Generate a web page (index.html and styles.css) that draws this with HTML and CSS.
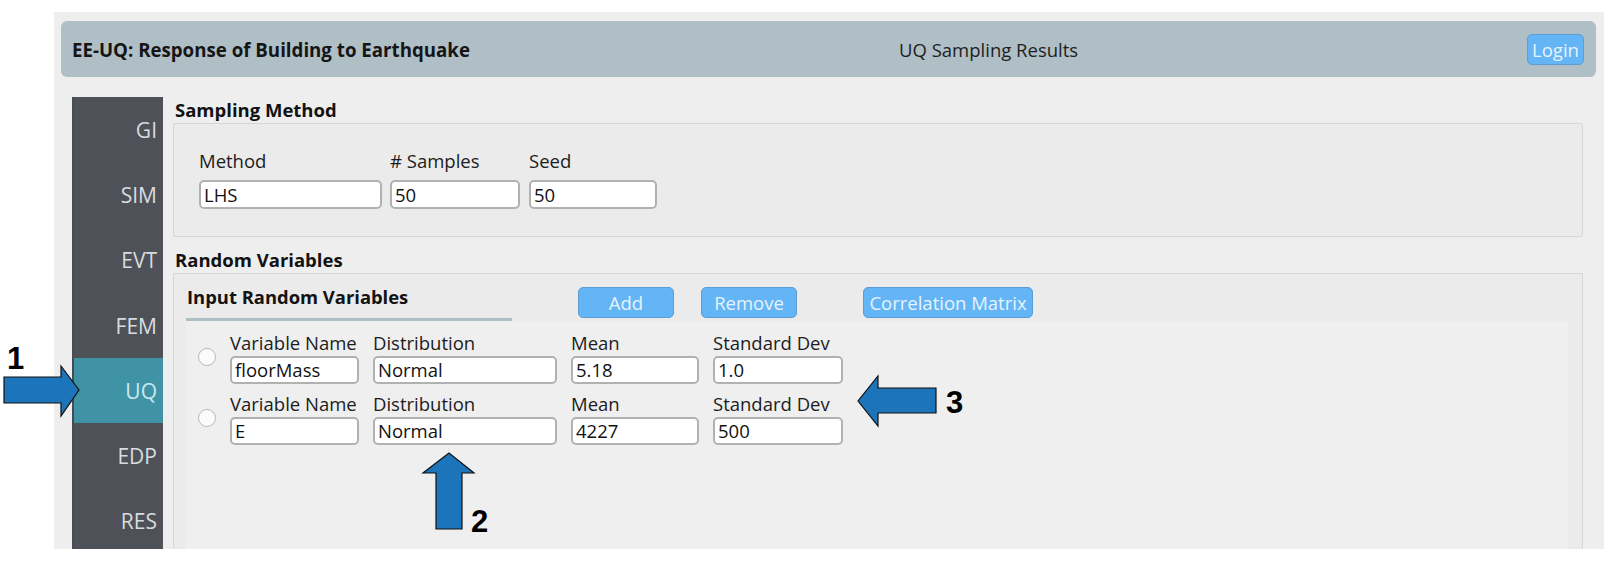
FILE: index.html
```html
<!DOCTYPE html>
<html>
<head>
<meta charset="utf-8">
<link rel="stylesheet" href="styles.css">
</head>
<body>
<div class="app">
  <header class="topbar">
    <div class="app-title">EE-UQ: Response of Building to Earthquake</div>
    <div class="page-title">UQ Sampling Results</div>
    <div class="btn login">Login</div>
  </header>
  <div class="body">
    <nav class="sidebar">
      <div class="nav-item">GI</div>
      <div class="nav-item">SIM</div>
      <div class="nav-item">EVT</div>
      <div class="nav-item">FEM</div>
      <div class="nav-item active">UQ</div>
      <div class="nav-item">EDP</div>
      <div class="nav-item">RES</div>
    </nav>
    <main class="content">
      <div class="section-title">Sampling Method</div>
      <div class="box sampling">
        <div class="field w-method"><div class="label">Method</div><div class="input">LHS</div></div>
        <div class="field w-samples"><div class="label"># Samples</div><div class="input">50</div></div>
        <div class="field w-seed"><div class="label">Seed</div><div class="input">50</div></div>
      </div>
      <div class="section-title second">Random Variables</div>
      <div class="box random">
        <div class="tabbar">
          <div class="tab">Input Random Variables</div>
          <div class="btn add">Add</div>
          <div class="btn remove">Remove</div>
          <div class="btn corr">Correlation Matrix</div>
        </div>
        <div class="vars">
          <div class="var-row">
            <span class="radio"></span>
            <div class="field w-name"><div class="label">Variable Name</div><div class="input">floorMass</div></div>
            <div class="field w-dist"><div class="label">Distribution</div><div class="input">Normal</div></div>
            <div class="field w-mean"><div class="label">Mean</div><div class="input">5.18</div></div>
            <div class="field w-std"><div class="label">Standard Dev</div><div class="input">1.0</div></div>
          </div>
          <div class="var-row">
            <span class="radio"></span>
            <div class="field w-name"><div class="label">Variable Name</div><div class="input">E</div></div>
            <div class="field w-dist"><div class="label">Distribution</div><div class="input">Normal</div></div>
            <div class="field w-mean"><div class="label">Mean</div><div class="input">4227</div></div>
            <div class="field w-std"><div class="label">Standard Dev</div><div class="input">500</div></div>
          </div>
        </div>
      </div>
    </main>
  </div>
</div>
<svg class="annotations" width="1615" height="569" viewBox="0 0 1615 569">
  <polygon class="arrow" points="4,377 61,377 61,366 79,390 61,416 61,403 4,403"/>
  <polygon class="arrow" points="436,529 436,473 423,473 449,453 474,473 462,473 462,529"/>
  <polygon class="arrow" points="936,388 878,388 878,376 858,401 878,426 878,413 936,413"/>
  <text class="num" x="7" y="369">1</text>
  <text class="num" x="471" y="532">2</text>
  <text class="num" x="946" y="413">3</text>
</svg>
</body>
</html>
```

FILE: styles.css
```css
* { box-sizing: border-box; }
html, body { margin: 0; padding: 0; background: #ffffff; }
body {
  width: 1615px;
  height: 569px;
  overflow: hidden;
  position: relative;
  font-family: "Open Sans", "Noto Sans", sans-serif;
  font-size: 18.5px;
  color: #1c1c1c;
}
.app {
  margin: 12px 0 0 54px;
  width: 1550px;
  height: 537px;
  background: #eeeeee;
  overflow: hidden;
  display: flex;
  flex-direction: column;
}
.topbar {
  margin: 9px 8px 0 7px;
  height: 56px;
  background: #b0bec5;
  border-radius: 6px;
  display: grid;
  grid-template-columns: 827px 1fr auto;
  align-items: center;
  padding: 0 12px 0 11px;
}
.app-title { font-weight: 700; font-size: 18.7px; color: #151515; }
.page-title { font-size: 18.5px; color: #1e1e1e; }
.btn {
  background: #64b5f6;
  border: 1px solid #5b9ed6;
  border-radius: 5px;
  color: #e6f3fd;
  font-size: 18.5px;
  display: flex;
  align-items: center;
  justify-content: center;
  height: 31px;
}
.login { width: 57px; }
.body {
  flex: 1;
  display: flex;
  margin-top: 20px;
  padding-left: 18px;
  gap: 10px;
  min-height: 0;
}
.sidebar {
  width: 91px;
  background: #4e5158;
  border-left: 2px solid #484b51;
  display: flex;
  flex-direction: column;
}
.nav-item {
  height: 65.3px;
  flex: none;
  display: flex;
  align-items: center;
  justify-content: flex-end;
  padding-right: 6px;
  font-size: 21px;
  color: #d9dcdf;
}
.nav-item.active { background: #3f93a5; color: #cbe8f1; }
.content { width: 1410px; display: flex; flex-direction: column; min-height: 0; }
.section-title { font-weight: 700; font-size: 18.5px; line-height: 26px; height: 26px; color: #121212; padding-left: 2px; }
.section-title.second { margin-top: 10px; }
.box {
  background: #ebebeb;
  border: 1px solid #d6d6d6;
  border-radius: 2px;
}
.sampling {
  display: flex;
  gap: 8px;
  padding: 25px 24px 27px 25px;
}
.field { display: flex; flex-direction: column; }
.label { line-height: 24px; height: 24px; margin-bottom: 7px; white-space: nowrap; }
.input {
  background: #ffffff;
  border: 2px solid #b1b1b1;
  border-radius: 5px;
  height: 29px;
  line-height: 25px;
  padding: 0 3px;
  color: #111;
  white-space: nowrap;
  overflow: hidden;
}
.w-method { width: 183px; }
.w-samples { width: 130px; }
.w-seed { width: 128px; margin-left: 1px; }
.random {
  flex: 1;
  padding: 0 14px 0 12px;
  display: flex;
  flex-direction: column;
  border-bottom: none;
}
.tabbar { height: 47px; flex: none; display: flex; align-items: flex-end; }
.tab {
  width: 326px;
  font-weight: 700;
  font-size: 18.4px;
  line-height: 24px;
  padding: 0 0 9px 1px;
  border-bottom: 3px solid #b0bec5;
  color: #131313;
}
.tabbar .btn { margin-bottom: 3px; }
.add { width: 96px; margin-left: 66px; }
.remove { width: 96px; margin-left: 27px; }
.corr { width: 170px; margin-left: 66px; }
.vars {
  flex: 1;
  background: #efefef;
  padding: 11px 0 0 12px;
  display: flex;
  flex-direction: column;
  gap: 9px;
}
.var-row { display: flex; align-items: flex-start; gap: 14px; }
.var-row .label { line-height: 22px; height: 22px; margin-bottom: 2px; }
.var-row .input { height: 28px; line-height: 24px; }
.radio {
  width: 18px;
  height: 18px;
  margin-top: 16px;
  border-radius: 50%;
  border: 1px solid #b9b9b9;
  background: #fbfbfb;
  flex: none;
}
.w-name { width: 129px; }
.w-dist { width: 184px; }
.w-mean { width: 128px; }
.w-std { width: 130px; }
.annotations { position: absolute; left: 0; top: 0; pointer-events: none; }
.arrow { fill: #1c74bb; stroke: #111; stroke-width: 1.2; }
.num { font-family: "Liberation Sans", Arial, sans-serif; font-weight: 700; font-size: 31px; fill: #000; }
```
